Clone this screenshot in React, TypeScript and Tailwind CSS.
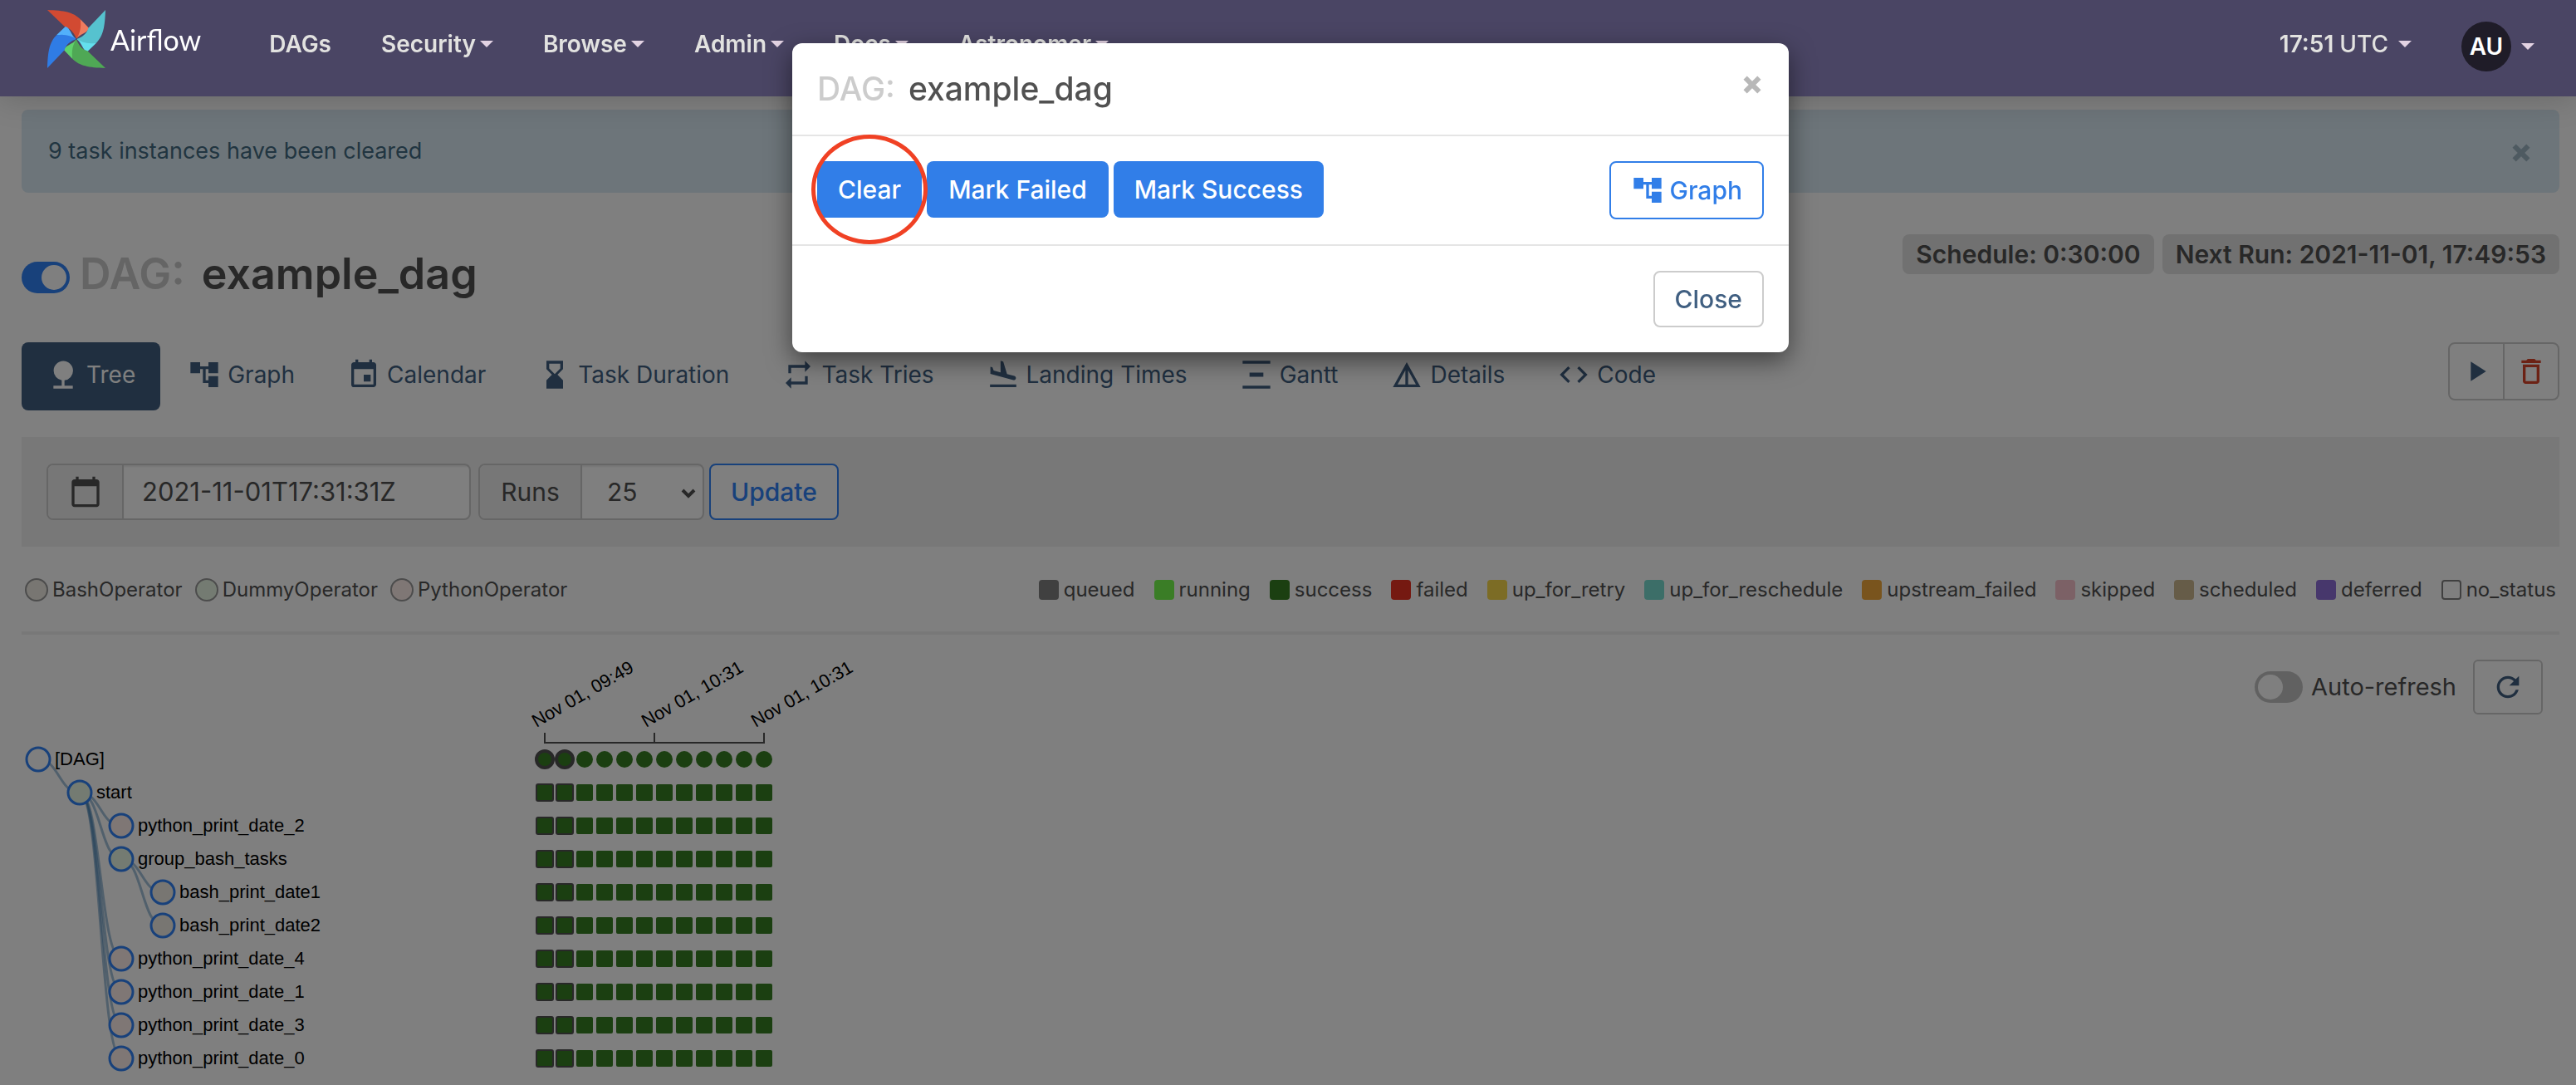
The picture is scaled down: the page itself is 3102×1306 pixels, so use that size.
import type { ReactNode } from "react";
import {
  MdAccountTree,
  MdCalendarToday,
  MdCode,
  MdDeleteOutline,
  MdDetails,
  MdEvent,
  MdFlightLand,
  MdHourglassBottom,
  MdNature,
  MdPlayArrow,
  MdRefresh,
  MdRepeat,
  MdVerticalDistribute,
} from "react-icons/md";

const blades = [
  { angle: 0, dark: "#d24a32", light: "#f07b5e" },
  { angle: 90, dark: "#56c2cf", light: "#64dfed" },
  { angle: 180, dark: "#4fa855", light: "#60d26c" },
  { angle: 270, dark: "#2f7ce5", light: "#52b0fb" },
];

function Pinwheel() {
  return (
    <svg viewBox="0 0 210 210" className="size-[70px]" aria-hidden="true">
      {blades.map((b) => (
        <g key={b.angle} transform={`rotate(${b.angle} 105 105)`}>
          <path d="M119 33 L150 65 C146 84 118 84 105 105 Z" fill={b.light} />
          <path d="M0 0 C62 2 93 8 119 33 C124 62 117 87 105 105 C99 85 84 66 65 62 Z" fill={b.dark} />
        </g>
      ))}
      <circle cx="105" cy="105" r="3" fill="#4a4564" />
    </svg>
  );
}

function Caret() {
  return (
    <svg viewBox="0 0 16 8" className="h-2 w-4 fill-[#e3d3e3]" aria-hidden="true">
      <path d="M0 0H16L8 8Z" />
    </svg>
  );
}

function CloseMark({ className }: { className: string }) {
  return (
    <svg viewBox="0 0 20 20" className={className} aria-hidden="true">
      <path d="M3 3L17 17M17 3L3 17" fill="none" stroke="currentColor" strokeWidth="5" />
    </svg>
  );
}

const menus = [
  { label: "DAGs", caret: false },
  { label: "Security", caret: true },
  { label: "Browse", caret: true },
  { label: "Admin", caret: true },
  { label: "Docs", caret: true },
  { label: "Astronomer", caret: true },
];

function Header() {
  return (
    <header className="relative z-20 flex h-29 items-start justify-between bg-[#4a4564] pr-[50px] pl-[57px] text-[28px] font-semibold text-[#e2e2e0] shadow-[0_0_40px_rgba(0,0,0,0.2)]">
      <div className="flex items-start">
        <a href="#home" className="flex items-center gap-[6px] pt-3">
          <Pinwheel />
          <span className="font-['Lato'] text-[34px] font-normal text-white">Airflow</span>
        </a>
        <nav className="flex gap-[60px] pt-[34px] pl-[82px] leading-[38px]">
          {menus.map((m) => (
            <a key={m.label} href="#menu" className="flex items-center gap-[5px]">
              {m.label}
              {m.caret && <Caret />}
            </a>
          ))}
        </nav>
      </div>
      <div className="flex gap-[60px]">
        <button type="button" className="flex items-center gap-3 self-start pt-[34px] leading-[38px]">
          <span>
            17:51 <span className="font-medium">UTC</span>
          </span>
          <Caret />
        </button>
        <button type="button" className="flex items-center gap-3 pt-[26px]">
          <span className="flex size-15 items-center justify-center rounded-full bg-[#1f1c28] text-white">AU</span>
          <Caret />
        </button>
      </div>
    </header>
  );
}

const tabs: { label: string; icon: ReactNode; active?: boolean }[] = [
  { label: "Tree", icon: <MdNature />, active: true },
  { label: "Graph", icon: <MdAccountTree /> },
  { label: "Calendar", icon: <MdEvent /> },
  { label: "Task Duration", icon: <MdHourglassBottom /> },
  { label: "Task Tries", icon: <MdRepeat /> },
  { label: "Landing Times", icon: <MdFlightLand /> },
  { label: "Gantt", icon: <MdVerticalDistribute /> },
  { label: "Details", icon: <MdDetails /> },
  { label: "Code", icon: <MdCode /> },
];

function Tabs() {
  return (
    <nav className="flex gap-[3px] text-[28px] leading-[38px]">
      {tabs.map((t) => (
        <a
          key={t.label}
          href="#view"
          className={
            t.active
              ? "flex h-[82px] items-center gap-2 rounded-lg bg-[#405f81] px-[30px] pb-1 text-white"
              : "flex h-[82px] items-center gap-2 rounded-lg px-[30px] pb-1 text-[#405f81]"
          }
        >
          <span className="text-[40px]">{t.icon}</span>
          <span>{t.label}</span>
        </a>
      ))}
    </nav>
  );
}

const operators = [
  { label: "BashOperator", fill: "bg-[#f0ede4]" },
  { label: "DummyOperator", fill: "bg-[#e8f7e4]" },
  { label: "PythonOperator", fill: "bg-[#ffefeb]" },
];

const states = [
  { label: "queued", box: "bg-[#808080]" },
  { label: "running", box: "bg-[#75fb4c]" },
  { label: "success", box: "bg-[#377e22]" },
  { label: "failed", box: "bg-[#ea3323]" },
  { label: "up_for_retry", box: "bg-[#f9d84a]" },
  { label: "up_for_reschedule", box: "bg-[#78ddd0]" },
  { label: "upstream_failed", box: "bg-[#f2a83b]" },
  { label: "skipped", box: "bg-[#f8c3cc]" },
  { label: "scheduled", box: "bg-[#cdb891]" },
  { label: "deferred", box: "bg-[#8f6fd8]" },
  { label: "no_status", box: "border-2 border-[#808080] bg-white" },
];

const BASH = "#f0ede4";
const DUMMY = "#e8f7e4";
const PYTHON = "#ffefeb";

const nodes = [
  { label: "[DAG]", depth: 0, fill: "#ffffff", parent: -1 },
  { label: "start", depth: 1, fill: DUMMY, parent: 0 },
  { label: "python_print_date_2", depth: 2, fill: PYTHON, parent: 1 },
  { label: "group_bash_tasks", depth: 2, fill: DUMMY, parent: 1 },
  { label: "bash_print_date1", depth: 3, fill: BASH, parent: 3 },
  { label: "bash_print_date2", depth: 3, fill: BASH, parent: 3 },
  { label: "python_print_date_4", depth: 2, fill: PYTHON, parent: 1 },
  { label: "python_print_date_1", depth: 2, fill: PYTHON, parent: 1 },
  { label: "python_print_date_3", depth: 2, fill: PYTHON, parent: 1 },
  { label: "python_print_date_0", depth: 2, fill: PYTHON, parent: 1 },
];

const nodeX = (depth: number) => 20 + depth * 50;
const nodeY = (row: number) => 130 + row * 40;
const runX = (run: number) => 630 + run * 24;
const runs = Array.from({ length: 12 }, (_, i) => i);
const ticks = [
  { x: 630, label: "Nov 01, 09:49" },
  { x: 762, label: "Nov 01, 10:31" },
  { x: 894, label: "Nov 01, 10:31" },
];

function TreeChart() {
  return (
    <svg width="1060" height="520" className="font-['Liberation_Sans',sans-serif] text-[22px]" role="img" aria-label="Task tree">
      {nodes.map((n, row) => {
        if (n.parent < 0) return null;
        const x0 = nodeX(nodes[n.parent].depth);
        const y0 = nodeY(n.parent);
        const x1 = nodeX(n.depth);
        const y1 = nodeY(row);
        const mid = (x0 + x1) / 2;
        return (
          <path
            key={n.label}
            d={`M${x0} ${y0}C${mid} ${y0} ${mid} ${y1} ${x1} ${y1}`}
            fill="none"
            stroke="#4682b4"
            strokeOpacity="0.5"
            strokeWidth="3"
          />
        );
      })}
      {nodes.map((n, row) => (
        <g key={n.label}>
          <circle cx={nodeX(n.depth)} cy={nodeY(row)} r="14" fill={n.fill} stroke="#3182f6" strokeWidth="3" />
          <text x={nodeX(n.depth) + 20} y={nodeY(row) + 7}>
            {n.label}
          </text>
          {runs.map((r) =>
            row === 0 ? (
              <circle
                key={r}
                cx={runX(r)}
                cy={nodeY(row)}
                r="10"
                fill="#377e22"
                stroke={r < 2 ? "#515151" : "none"}
                strokeWidth="4"
              />
            ) : (
              <rect
                key={r}
                x={runX(r) - 10}
                y={nodeY(row) - 10}
                width="20"
                height="20"
                rx="2"
                fill="#377e22"
                stroke={r < 2 ? "#515151" : "none"}
                strokeWidth="2"
              />
            ),
          )}
        </g>
      ))}
      <path d="M630 98V110H894V98M762 98V110" fill="none" stroke="#515151" strokeWidth="2" />
      {ticks.map((t) => (
        <text key={t.x} x={t.x - 10} y="92" transform={`rotate(-30 ${t.x - 10} 92)`}>
          {t.label}
        </text>
      ))}
    </svg>
  );
}

function DagPage() {
  return (
    <main className="pt-4 pr-5 pl-[26px] text-[#515151]">
      <div className="flex h-[100px] items-center justify-between rounded-lg bg-[#dbeaf4] pr-[34px] pl-8 text-[27px] text-[#426a82]">
        <span>9 task instances have been cleared</span>
        <button type="button" aria-label="Dismiss" className="pt-1">
          <CloseMark className="size-6 text-[#9db5c3]" />
        </button>
      </div>

      <div className="flex items-start justify-between pt-[50px]">
        <h1 className="flex items-center text-[52px] leading-[96px] font-semibold">
          <label className="mt-2 flex h-[38px] w-[58px] items-center justify-end rounded-full bg-[#3182f6] p-1">
            <input type="checkbox" defaultChecked className="sr-only" aria-label="Pause or unpause DAG" />
            <span className="size-[30px] rounded-full bg-white" />
          </label>
          <span className="pl-3 text-[#cbcbcb]">DAG:</span>
          <span className="pl-5">example_dag</span>
        </h1>
        <div className="flex gap-[10px] text-[30px] leading-[48px] font-semibold">
          <span className="rounded-lg bg-[#e3e3e3] px-4">Schedule: 0:30:00</span>
          <span className="rounded-lg bg-[#e3e3e3] px-4">Next Run: 2021-11-01, 17:49:53</span>
        </div>
      </div>

      <div className="flex items-start justify-between pt-[34px]">
        <Tabs />
        <div className="flex h-[70px] divide-x-2 divide-[#cccccc] rounded-lg border-2 border-[#cccccc] text-[40px]">
          <button type="button" aria-label="Trigger DAG" className="w-[66px] px-3 text-[#405f81]">
            <MdPlayArrow />
          </button>
          <button type="button" aria-label="Delete DAG" className="w-16 px-3 text-[#d9442a]">
            <MdDeleteOutline />
          </button>
        </div>
      </div>

      <form className="mt-8 flex h-33 items-center bg-[#f0f0f0] px-[30px] text-[30px]">
        <div className="flex h-[68px] w-[511px] overflow-hidden rounded-lg border-2 border-[#cccccc] bg-white">
          <span className="flex w-[91px] items-center justify-center border-r-2 border-[#cccccc] bg-[#eeeeee] text-[40px]">
            <MdCalendarToday />
          </span>
          <input
            type="text"
            aria-label="Base date"
            defaultValue="2021-11-01T17:31:31Z"
            className="min-w-0 flex-1 px-[22px] text-[31px] shadow-[inset_0_2px_2px_rgba(0,0,0,0.075)]"
          />
        </div>
        <div className="relative ml-[9px] flex h-[68px] w-[272px] overflow-hidden rounded-lg border-2 border-[#cccccc] bg-white">
          <label htmlFor="runs" className="flex w-[123px] items-center justify-center border-r-2 border-[#cccccc] bg-[#eeeeee]">
            Runs
          </label>
          <select
            id="runs"
            defaultValue="25"
            className="min-w-0 flex-1 appearance-none pl-[30px] shadow-[inset_0_2px_2px_rgba(0,0,0,0.075)]"
          >
            <option>25</option>
          </select>
          <svg viewBox="0 0 18 12" className="pointer-events-none absolute top-7 right-2 h-3 w-[18px]" aria-hidden="true">
            <path d="M2 2L9 9L16 2" fill="none" stroke="currentColor" strokeWidth="4" />
          </svg>
        </div>
        <button
          type="button"
          className="ml-[6px] h-[68px] rounded-lg border-2 border-[#3182f6] bg-white px-6 font-medium text-[#3182f6]"
        >
          Update
        </button>
      </form>

      <div className="flex items-center justify-between pt-8 pr-1 pl-1 text-[24px] leading-[40px]">
        <div className="flex gap-[15px]">
          {operators.map((o) => (
            <span key={o.label} className="flex items-center gap-[5px]">
              <span className={`size-7 rounded-full border-2 border-[#999999] ${o.fill}`} />
              {o.label}
            </span>
          ))}
        </div>
        <div className="flex gap-[23px]">
          {states.map((s) => (
            <span key={s.label} className="flex items-center gap-[6px]">
              <span className={`size-6 rounded ${s.box}`} />
              {s.label}
            </span>
          ))}
        </div>
      </div>

      <hr className="mt-[30px] border-t-4 border-[#f0f0f0]" />

      <div className="flex items-start justify-between pt-5">
        <TreeChart />
        <div className="flex items-center pt-[10px] pr-5 text-[29px]">
          <label className="flex items-center gap-[10px]">
            <input type="checkbox" className="peer sr-only" />
            <span className="flex h-[38px] w-[58px] items-center rounded-full bg-[#c3c3c3] p-1">
              <span className="size-[30px] rounded-full bg-white" />
            </span>
            Auto-refresh
          </label>
          <button
            type="button"
            aria-label="Refresh"
            className="ml-5 flex h-[66px] w-[84px] items-center justify-center rounded-md border-2 border-[#cccccc] text-[40px] text-[#405f81]"
          >
            <MdRefresh />
          </button>
        </div>
      </div>
    </main>
  );
}

function DagModal() {
  return (
    <div className="fixed inset-x-0 top-0 z-30 flex justify-center pt-[52px] pr-5 pl-[26px]">
      <section
        role="dialog"
        aria-labelledby="dag-modal-title"
        className="w-[1200px] rounded-xl bg-white text-[30px] font-medium shadow-[0_10px_30px_rgba(0,0,0,0.5)]"
      >
        <div className="flex h-28 items-start justify-between border-b-2 border-[#e5e5e5] pr-8 pl-[30px]">
          <h2 id="dag-modal-title" className="flex gap-4 text-[39px] leading-[110px] text-[#515151]">
            <span className="text-[#cccccc]">DAG:</span>
            <span>example_dag</span>
          </h2>
          <button type="button" aria-label="Close dialog" className="pt-[38px]">
            <CloseMark className="size-6 text-[#b8b8b8]" />
          </button>
        </div>
        <div className="flex h-33 items-start justify-between border-b-2 border-[#e5e5e5] px-[30px] pt-[30px]">
          <div className="flex gap-[6px] text-white">
            <span className="relative">
              <button type="button" className="h-[68px] rounded-lg bg-[#317ee8] px-[25px]">
                Clear
              </button>
              <span className="pointer-events-none absolute -inset-x-[7px] -inset-y-8 rounded-[50%] border-5 border-[#f04124]" />
            </span>
            <button type="button" className="h-[68px] rounded-lg bg-[#317ee8] px-[26px]">
              Mark Failed
            </button>
            <button type="button" className="h-[68px] rounded-lg bg-[#317ee8] px-[25px]">
              Mark Success
            </button>
          </div>
          <a
            href="#graph"
            className="flex h-[70px] items-center gap-[6px] rounded-lg border-2 border-[#317ee8] px-6 text-[#317ee8]"
          >
            <MdAccountTree className="size-10" />
            Graph
          </a>
        </div>
        <div className="flex h-32 items-center justify-end px-[30px]">
          <button type="button" className="h-[68px] rounded-lg border-2 border-[#cccccc] px-6 text-[#405f81]">
            Close
          </button>
        </div>
      </section>
    </div>
  );
}

export default function App() {
  return (
    <div className="min-h-screen overflow-hidden bg-white font-['Inter','Liberation_Sans',sans-serif]">
      <Header />
      <DagPage />
      <div className="fixed inset-0 z-10 bg-black/50" />
      <DagModal />
    </div>
  );
}
